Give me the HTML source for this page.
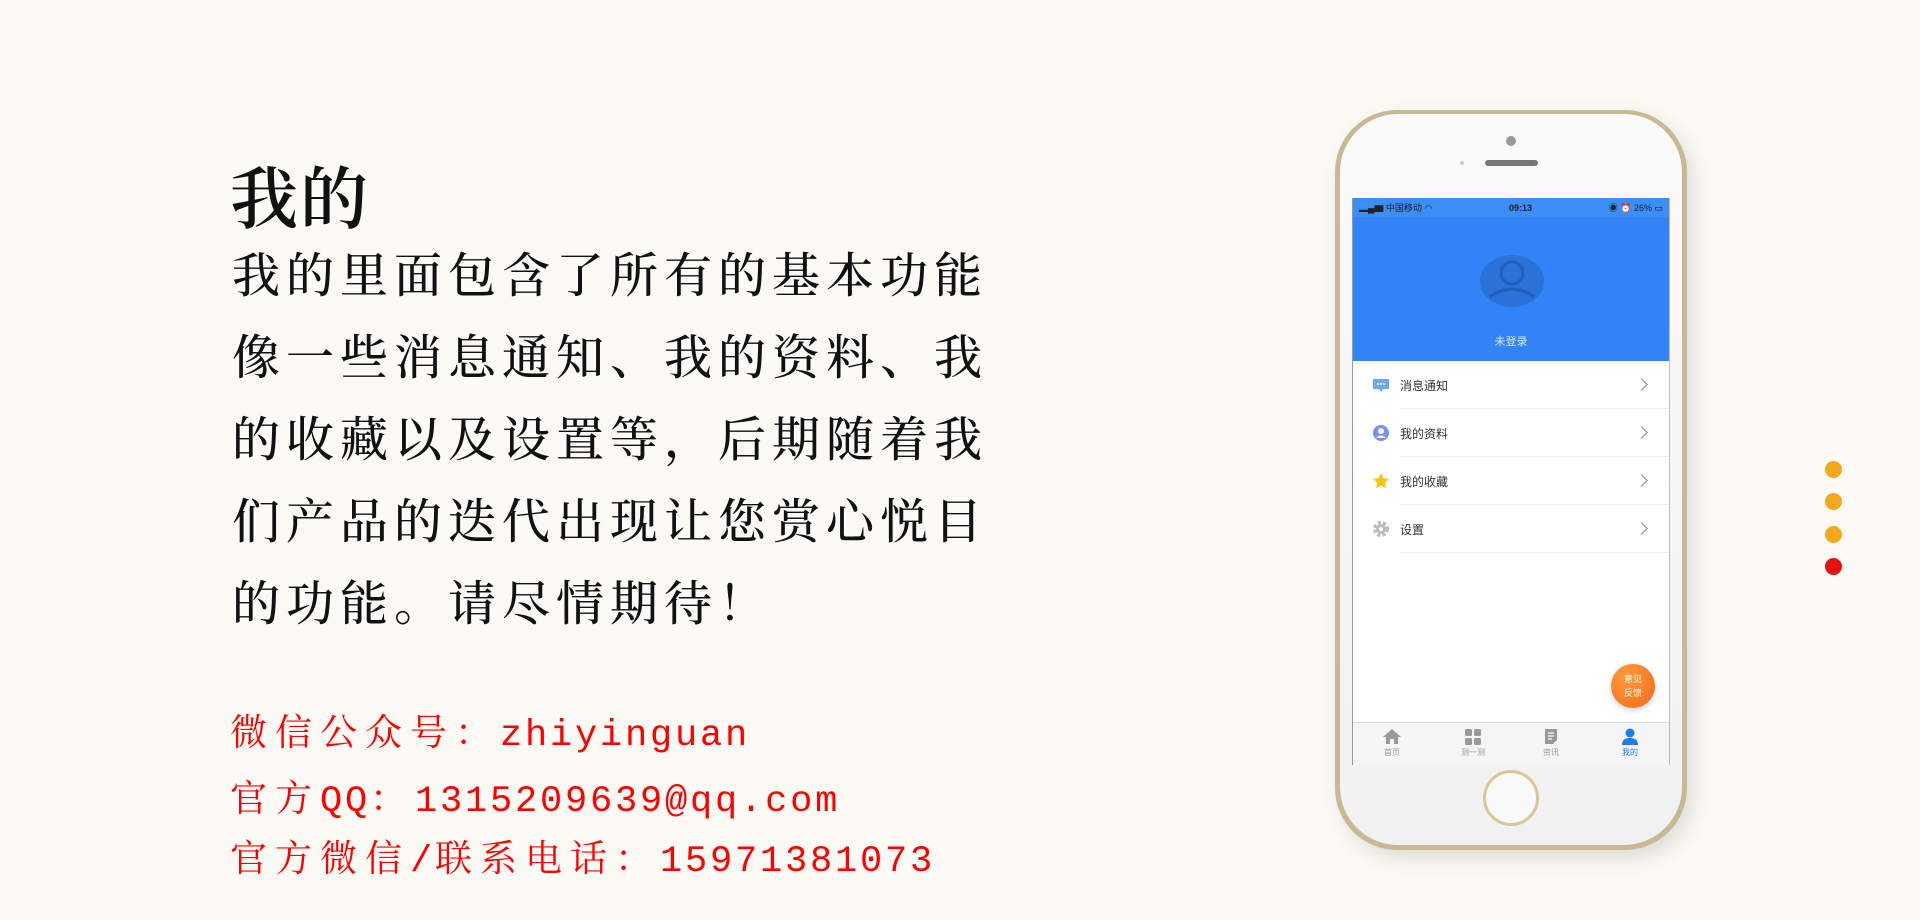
<!DOCTYPE html>
<html><head><meta charset="utf-8"><style>
*{margin:0;padding:0;box-sizing:border-box}
body{width:1920px;height:920px;background:#fbfaf5;position:relative;overflow:hidden;font-family:"Liberation Serif","Noto Serif CJK SC",serif}
.t{position:absolute;left:230px;top:146px;font-size:68px;color:#111;font-weight:600;letter-spacing:2px}
.b{position:absolute;left:232px;top:236px;font-size:48px;line-height:82px;letter-spacing:6px;color:#111;white-space:nowrap;font-weight:500}
.r{position:absolute;left:230px;font-size:37px;letter-spacing:8px;color:#f00;white-space:nowrap}
.r span{font-family:"Liberation Mono",monospace;letter-spacing:2.8px}
.dot{position:absolute;left:1825px;width:17px;height:17px;border-radius:50%;background:#f5a81c}
.phone{position:absolute;left:1335px;top:110px;width:352px;height:740px;border-radius:62px;background:#c8b894;box-shadow:6px 8px 20px rgba(0,0,0,.12)}
.inner{position:absolute;left:5px;top:4px;right:5px;bottom:5px;border-radius:58px;background:linear-gradient(#fafafa,#f1f1f2);}
.screen{position:absolute;left:1352px;top:198px;width:318px;height:567px;background:#fff;font-family:"Liberation Sans","Noto Sans CJK SC",sans-serif;overflow:hidden;border-left:1px solid #999;border-right:1px solid #bbb}
.sb{height:19px;background:#3b8ef5;color:#222;font-size:9px;display:flex;align-items:center;justify-content:space-between;padding:0 6px}
.hd{height:144px;background:#3283f7;position:relative}
.av{position:absolute;left:127px;top:38px;width:64px;height:52px;border-radius:50%;background:#2a71d8}
.row{height:48px;display:flex;align-items:center;position:relative;font-size:12px;color:#333}
.row .ic{position:absolute;left:19px;width:18px;height:18px}
.row .tx{position:absolute;left:47px}
.row .ch{position:absolute;right:23px;top:19px;width:9px;height:9px;border-right:1.3px solid #888;border-top:1.3px solid #888;transform:rotate(45deg)}
.row:after{content:"";position:absolute;left:47px;right:0;bottom:0;height:1px;background:#eee}
.tab{position:absolute;left:0;right:0;bottom:0;height:43px;background:#f5f5f5;border-top:1px solid #ddd}
.ti{position:absolute;top:5px;width:40px;text-align:center;font-size:8px;color:#999}
</style></head><body>
<div class="t">我的</div>
<div class="b">我的里面包含了所有的基本功能<br>像一些消息通知、我的资料、我<br>的收藏以及设置等，后期随着我<br>们产品的迭代出现让您赏心悦目<br>的功能。请尽情期待！</div>
<div class="r" style="top:702px">微信公众号：<span>zhiyinguan</span></div>
<div class="r" style="top:768px">官方<span>QQ</span>：<span>1315209639@qq.com</span></div>
<div class="r" style="top:828px">官方微信<span>/</span>联系电话：<span>15971381073</span></div>
<div class="dot" style="top:461px"></div>
<div class="dot" style="top:493px"></div>
<div class="dot" style="top:526px"></div>
<div class="dot" style="top:558px;background:#e3120f"></div>

<div class="phone"><div class="inner"></div></div>
<div style="position:absolute;left:1506px;top:136px;width:10px;height:10px;border-radius:50%;background:#999"></div>
<div style="position:absolute;left:1460px;top:161px;width:4px;height:4px;border-radius:50%;background:#ccc"></div>
<div style="position:absolute;left:1485px;top:160px;width:53px;height:6px;border-radius:3px;background:#777"></div>
<div style="position:absolute;left:1483px;top:770px;width:56px;height:56px;border-radius:50%;border:3px solid #dcc596;background:#f9f9f9"></div>

<div class="screen">
<div class="sb"><span>▂▄▆ 中国移动 ◠</span><b>09:13</b><span>◉ ⏰ 26% ▭</span></div>
<div class="hd"><div class="av"><svg width="64" height="52" viewBox="0 0 64 52"><circle cx="32" cy="18" r="11" fill="none" stroke="#1f5fbd" stroke-width="3"/><path d="M10 42 Q32 26 54 42" fill="none" stroke="#1f5fbd" stroke-width="3"/></svg></div>
<div style="position:absolute;top:116px;width:100%;text-align:center;color:#dce9ff;font-size:11px">未登录</div></div>
<div class="row"><svg class="ic" viewBox="0 0 18 18"><rect x="1" y="3" width="16" height="10" fill="#6ea8f5"/><path d="M7 13l2 3 2-3z" fill="#6ea8f5"/><circle cx="6" cy="8" r="1" fill="#fff"/><circle cx="9" cy="8" r="1" fill="#fff"/><circle cx="12" cy="8" r="1" fill="#fff"/></svg><span class="tx">消息通知</span><i class="ch"></i></div>
<div class="row"><svg class="ic" viewBox="0 0 18 18"><circle cx="9" cy="9" r="8" fill="#7b8ff0"/><circle cx="9" cy="7" r="3" fill="#fff"/><path d="M4 14q5-5 10 0z" fill="#fff"/></svg><span class="tx">我的资料</span><i class="ch"></i></div>
<div class="row"><svg class="ic" viewBox="0 0 18 18"><path d="M9 1l2.4 5.3 5.6.6-4.2 3.8 1.2 5.6L9 13.4 4 16.3l1.2-5.6L1 6.9l5.6-.6z" fill="#fcc20e"/></svg><span class="tx">我的收藏</span><i class="ch"></i></div>
<div class="row"><svg class="ic" viewBox="0 0 18 18"><circle cx="9" cy="9" r="6" fill="none" stroke="#bbb" stroke-width="4" stroke-dasharray="3 2"/><circle cx="9" cy="9" r="5" fill="#bbb"/><circle cx="9" cy="9" r="2" fill="#fff"/></svg><span class="tx">设置</span><i class="ch"></i></div>
<div style="position:absolute;left:258px;top:466px;width:44px;height:44px;border-radius:50%;background:radial-gradient(circle at 35% 30%,#ff9a3c,#f26a1b);color:#ffe;font-size:9px;text-align:center;line-height:14px;padding-top:8px;box-shadow:0 2px 6px rgba(0,0,0,.2)">意见<br>反馈</div>
<div class="tab">
<div class="ti" style="left:19px"><svg width="20" height="17" viewBox="0 0 20 17"><path d="M10 1L1 9h3v7h4v-5h4v5h4V9h3z" fill="#999"/></svg><br>首页</div>
<div class="ti" style="left:100px"><svg width="18" height="17" viewBox="0 0 18 17"><rect x="1" y="1" width="7" height="7" rx="1.5" fill="#999"/><rect x="10" y="1" width="7" height="7" rx="1.5" fill="#999"/><rect x="1" y="10" width="7" height="7" rx="1.5" fill="#999"/><rect x="10" y="10" width="7" height="7" rx="1.5" fill="#999"/></svg><br>测一测</div>
<div class="ti" style="left:178px"><svg width="16" height="17" viewBox="0 0 16 17"><path d="M2 1h12v11l-4 4H2z" fill="#999"/><path d="M5 5h6M5 8h6M5 11h4" stroke="#fff" stroke-width="1.2"/></svg><br>资讯</div>
<div class="ti" style="left:257px;color:#1a7cf0"><svg width="18" height="17" viewBox="0 0 18 17"><circle cx="9" cy="5" r="4.5" fill="#1a7cf0"/><path d="M1 17q0-7 8-7t8 7z" fill="#1a7cf0"/></svg><br>我的</div>
</div>
</div>
</body></html>
